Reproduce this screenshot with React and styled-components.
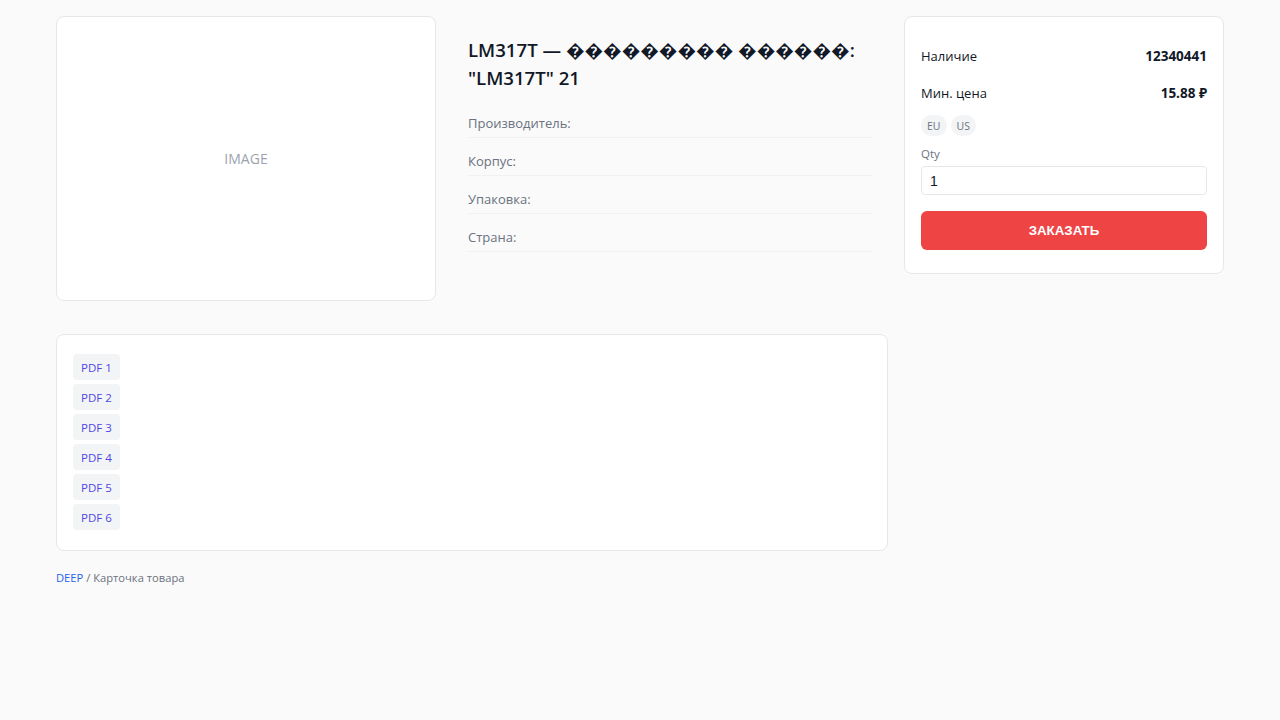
import React from "react";
import styled, { createGlobalStyle } from "styled-components";

const Global = createGlobalStyle`
  html, body { margin: 0; padding: 0; background: #fafafa; }
  body { font-family: "Open Sans", "Noto Sans", sans-serif; color: #111827; }
  * { box-sizing: border-box; }
`;

const Page = styled.div`
  padding: 16px 56px;
  display: flex;
  flex-direction: column;
  gap: 18px;
`;

const Layout = styled.div`
  display: grid;
  grid-template-columns: 832px 320px;
  gap: 16px;
  align-items: start;
`;

const MainCol = styled.div`
  display: flex;
  flex-direction: column;
  gap: 33px;
`;

const TopRow = styled.div`
  display: grid;
  grid-template-columns: 380px 404px;
  gap: 32px;
`;

const Card = styled.div`
  background: #fff;
  border: 1px solid #e5e7eb;
  border-radius: 8px;
`;

const ImageBox = styled(Card)`
  height: 285px;
  display: flex;
  align-items: center;
  justify-content: center;
  color: #9ca3af;
  font-size: 14px;
`;

const Info = styled.div`
  padding-top: 20px;
`;

const Title = styled.h1`
  margin: 0 0 8px;
  font-size: 18.6px;
  line-height: 28px;
  font-weight: 600;
  color: #111827;
`;

const SpecRow = styled.div`
  padding: 13px 0 3px;
  line-height: 21px;
  font-size: 13px;
  color: #6b7280;
  border-bottom: 1px solid #f0f1f3;
`;

const Side = styled(Card)`
  padding: 25px 16px 23px;
`;

const StatRow = styled.div`
  display: flex;
  justify-content: space-between;
  align-items: center;
  padding: 4px 0;
  line-height: 21px;
  font-size: 13px;
  color: #111827;
  & + & { margin-top: 8px; }
`;

const StatValue = styled.span`
  font-weight: 700;
  font-size: 13.5px;
`;

const Chips = styled.div`
  display: flex;
  gap: 4px;
  margin-top: 7px;
`;

const Chip = styled.span`
  display: inline-flex;
  align-items: center;
  height: 21px;
  padding: 0 6px;
  border-radius: 999px;
  background: #f3f4f6;
  color: #6b7280;
  font-size: 10.5px;
`;

const Label = styled.div`
  margin-top: 9px;
  font-size: 11.5px;
  line-height: 18px;
  color: #6b7280;
`;

const QtyInput = styled.input`
  display: block;
  width: 100%;
  height: 29px;
  margin-top: 3px;
  padding: 0 8px;
  border: 1px solid #e5e7eb;
  border-radius: 4px;
  font-family: "Liberation Sans", Arial, sans-serif;
  font-size: 14px;
  color: #111827;
  background: #fff;
  outline: none;
`;

const OrderButton = styled.button`
  display: block;
  width: 100%;
  height: 39px;
  margin-top: 16px;
  border: none;
  border-radius: 6px;
  background: #ef4444;
  color: #fff;
  font-family: "Liberation Sans", Arial, sans-serif;
  font-weight: 700;
  font-size: 13.3px;
  cursor: pointer;
`;

const Docs = styled(Card)`
  padding: 19px 16px 20px;
  display: flex;
  flex-direction: column;
  align-items: flex-start;
  gap: 4px;
`;

const DocLink = styled.a`
  display: inline-flex;
  align-items: center;
  height: 26px;
  padding: 0 8px;
  border-radius: 4px;
  background: #f3f4f6;
  color: #4f46e5;
  font-size: 11.5px;
  text-decoration: none;
`;

const Crumbs = styled.div`
  font-size: 11.2px;
  line-height: 18px;
  color: #6b7280;
`;

const CrumbLink = styled.a`
  color: #2563eb;
  text-decoration: none;
`;

const R = "\uFFFD";

export default function App() {
  const specs = ["Производитель:", "Корпус:", "Упаковка:", "Страна:"];
  return (
    <>
      <Global />
      <Page>
        <Layout>
          <MainCol>
            <TopRow>
              <ImageBox>IMAGE</ImageBox>
              <Info>
                <Title>
                  LM317T — {R.repeat(9)} {R.repeat(6)}: "LM317T" 21
                </Title>
                {specs.map((s) => (
                  <SpecRow key={s}>{s}</SpecRow>
                ))}
              </Info>
            </TopRow>
            <Docs>
              {[1, 2, 3, 4, 5, 6].map((n) => (
                <DocLink key={n} href="#">
                  PDF {n}
                </DocLink>
              ))}
            </Docs>
          </MainCol>
          <Side>
            <StatRow>
              <span>Наличие</span>
              <StatValue>12340441</StatValue>
            </StatRow>
            <StatRow>
              <span>Мин. цена</span>
              <StatValue>15.88 ₽</StatValue>
            </StatRow>
            <Chips>
              <Chip>EU</Chip>
              <Chip>US</Chip>
            </Chips>
            <Label>Qty</Label>
            <QtyInput defaultValue="1" />
            <OrderButton>ЗАКАЗАТЬ</OrderButton>
          </Side>
        </Layout>
        <Crumbs>
          <CrumbLink href="#">DEEP</CrumbLink> / Карточка товара
        </Crumbs>
      </Page>
    </>
  );
}
